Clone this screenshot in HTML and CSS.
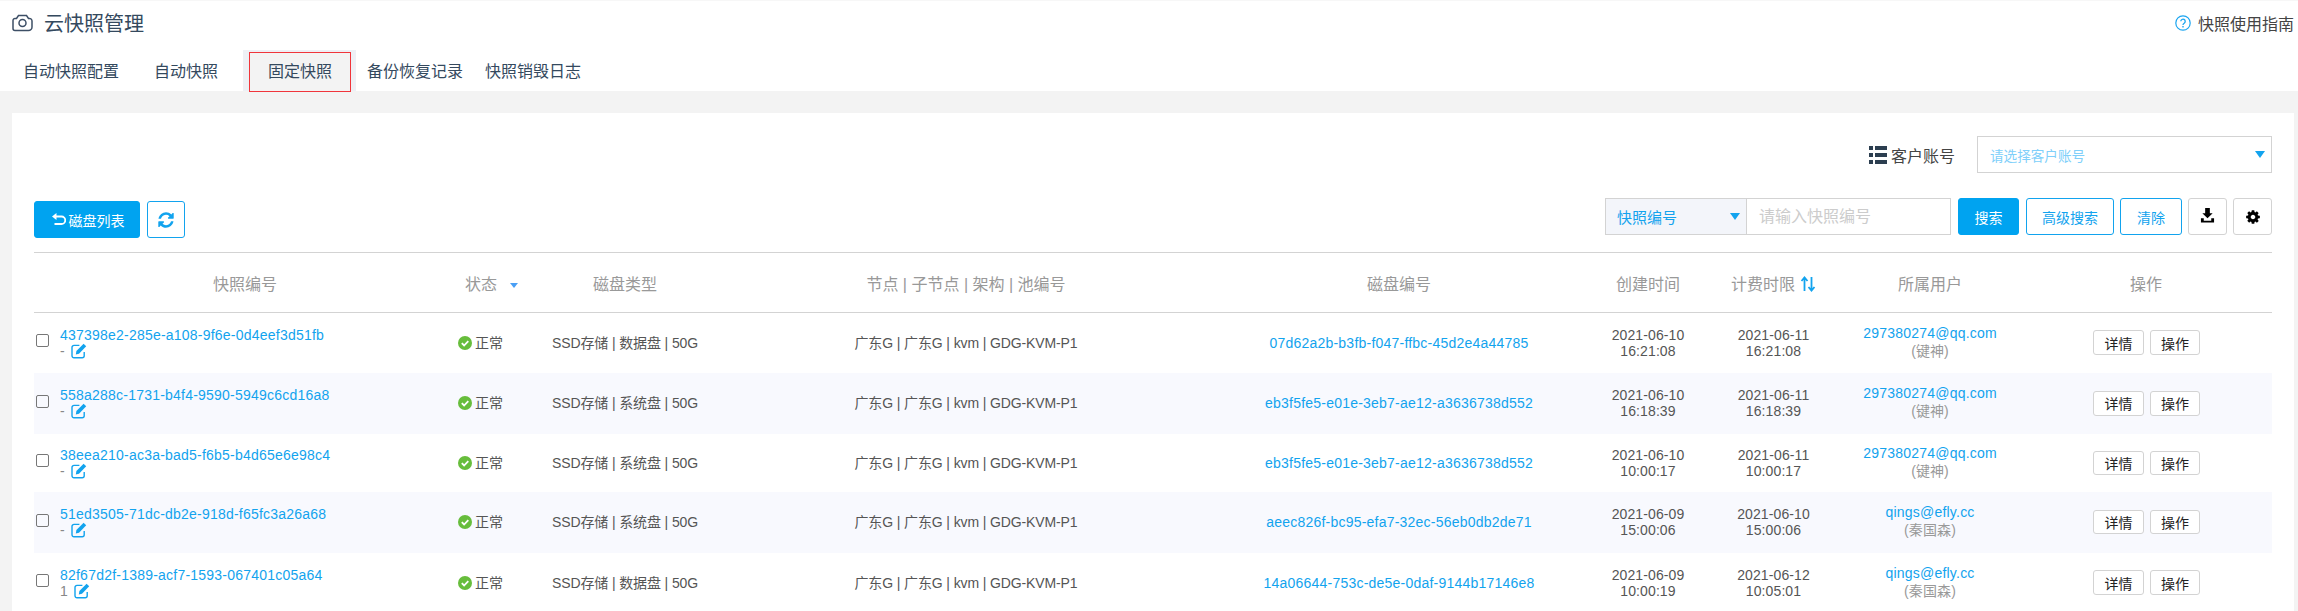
FILE: index.html
```html
<!DOCTYPE html>
<html lang="zh-CN">
<head>
    <meta charset="UTF-8">
    <title>云快照管理</title>
    <link rel="stylesheet" href="styles.css">
</head>
<body>
    <svg class="icon-defs" xmlns="http://www.w3.org/2000/svg">
        <symbol id="i-edit" viewBox="0 0 16 16">
            <path d="M13.2 9v3.8a2 2 0 0 1-2 2H3a2 2 0 0 1-2-2V4.4a2 2 0 0 1 2-2h5.4" fill="none" stroke="currentColor" stroke-width="1.4"/>
            <path d="M12.6.7l2.6 2.6-7.2 7.4-3.2.7.6-3.3z" fill="currentColor"/>
        </symbol>
        <symbol id="i-ok" viewBox="0 0 14 14">
            <circle cx="7" cy="7" r="7" fill="#67bd3c"/>
            <path d="M3.8 7.2l2.3 2.3 4.2-4.4" fill="none" stroke="#fff" stroke-width="1.8"/>
        </symbol>
    </svg>

    <header class="page-head">
        <div class="title-row">
            <h1 class="page-title">
                <svg class="camera" viewBox="0 0 21 18"><path d="M1 6.5a2 2 0 0 1 2-2h1.5l2-3h8l2 3h.5A2.5 2.5 0 0 1 20 7v6a3.5 3.5 0 0 1-3.5 3.5H3a2 2 0 0 1-2-2z" fill="none" stroke="#3d4f66" stroke-width="1.5"/><circle cx="10.5" cy="9" r="3.5" fill="none" stroke="#3d4f66" stroke-width="1.5"/></svg>
                云快照管理
            </h1>
            <a class="guide">
                <svg class="help" viewBox="0 0 16 16"><circle cx="8" cy="8" r="7.2" fill="none" stroke="#1ba5f0" stroke-width="1.2"/><path d="M5.8 6.3a2.2 2.2 0 1 1 3.4 1.9c-.8.5-1.2.9-1.2 1.8" fill="none" stroke="#1ba5f0" stroke-width="1.3"/><rect x="7.3" y="11" width="1.4" height="1.5" fill="#1ba5f0"/></svg>
                快照使用指南
            </a>
        </div>
        <nav class="tabs">
            <a class="tab tab-config">自动快照配置</a>
            <a class="tab tab-auto">自动快照</a>
            <a class="tab-wrap"><span class="tab-active">固定快照</span></a>
            <a class="tab tab-restore">备份恢复记录</a>
            <a class="tab">快照销毁日志</a>
        </nav>
    </header>

    <main class="card">
        <div class="account-row">
            <svg class="list-icon" viewBox="0 0 18 18"><path d="M0 0h4v4H0zM6 0h12v4H6zM0 7h4v4H0zM6 7h12v4H6zM0 14h4v4H0zM6 14h12v4H6z" fill="#2c3e50"/></svg>
            <span class="account-label">客户账号</span>
            <div class="account-select">
                <span>请选择客户账号</span>
                <i class="caret"></i>
            </div>
        </div>

        <div class="toolbar">
            <div class="toolbar-left">
                <button class="btn btn-primary btn-back">
                    <svg class="back-icon" viewBox="0 0 14 13"><path d="M0 3.5L4.5 0v7z" fill="#fff"/><path d="M3.5 3.5h6a3.5 3.5 0 0 1 0 7.5H2.5" fill="none" stroke="#fff" stroke-width="1.8"/></svg>
                    磁盘列表
                </button>
                <button class="btn btn-outline btn-refresh">
                    <svg viewBox="0 0 1792 1792"><path d="M1639 1056q0 5-1 7-64 268-268 434.5t-478 166.5q-146 0-282.5-55t-243.5-157l-129 129q-19 19-45 19t-45-19-19-45v-448q0-26 19-45t45-19h448q26 0 45 19t19 45-19 45l-137 137q71 66 161 102t187 36q134 0 250-65t186-179q11-17 53-117 8-23 30-23h192q13 0 22.5 9.5t9.5 22.5zm25-800v448q0 26-19 45t-45 19h-448q-26 0-45-19t-19-45 19-45l138-138q-148-137-349-137-134 0-250 65t-186 179q-11 17-53 117-8 23-30 23h-199q-13 0-22.5-9.5t-9.5-22.5v-7q65-268 270-434.5t480-166.5q146 0 284 55.5t245 156.5l130-129q19-19 45-19t45 19 19 45z" fill="#12a3ee"/></svg>
                </button>
            </div>
            <div class="toolbar-right">
                <div class="search-type">
                    <span>快照编号</span>
                    <i class="caret"></i>
                </div>
                <div class="search-input">请输入快照编号</div>
                <button class="btn btn-primary btn-search">搜索</button>
                <button class="btn btn-outline btn-advanced">高级搜索</button>
                <button class="btn btn-outline btn-clear">清除</button>
                <button class="btn btn-plain">
                    <svg class="download-icon" viewBox="0 0 16 16"><path d="M5.5 0h5v5.5h3L8 11 2.5 5.5h3z" fill="#000"/><path d="M1 11h3v2.5h8V11h3v4.5H1z" fill="#000"/></svg>
                </button>
                <button class="btn btn-plain">
                    <svg class="gear-icon" viewBox="0 0 1792 1792"><path d="M1152 896q0-106-75-181t-181-75-181 75-75 181 75 181 181 75 181-75 75-181zm512-109v222q0 12-8 23t-20 13l-185 28q-19 54-39 91 35 50 107 138 10 12 10 25t-9 23q-27 37-99 108t-94 71q-12 0-26-9l-138-108q-44 23-91 38-16 136-29 186-7 28-36 28h-222q-14 0-24.5-8.5t-11.5-21.5l-28-184q-49-16-90-37l-141 107q-10 9-25 9-14 0-25-11-126-114-165-168-7-10-7-23 0-12 8-23 15-21 51-66.5t54-70.5q-27-50-41-99l-183-27q-13-2-21-12.5t-8-23.5v-222q0-12 8-23t19-13l186-28q14-46 39-92-40-57-107-138-10-12-10-24 0-10 9-23 26-36 98.5-107.5t94.5-71.5q13 0 26 10l138 107q44-23 91-38 16-136 29-186 7-28 36-28h222q14 0 24.5 8.5t11.5 21.5l28 184q49 16 90 37l142-107q9-9 24-9 13 0 25 10 129 119 165 170 7 8 7 22 0 12-8 23-15 21-51 66.5t-54 70.5q26 50 41 98l183 28q13 2 21 12.5t8 23.5z" fill="#000"/></svg>
                </button>
            </div>
        </div>

        <table class="snap-table">
            <colgroup>
                <col class="col-id"><col class="col-status"><col class="col-type"><col class="col-node">
                <col class="col-disk"><col class="col-created"><col class="col-expire"><col class="col-user"><col class="col-action">
            </colgroup>
            <thead>
                <tr>
                    <th>快照编号</th>
                    <th>状态<i class="caret caret-small"></i></th>
                    <th>磁盘类型</th>
                    <th>节点 | 子节点 | 架构 | 池编号</th>
                    <th>磁盘编号</th>
                    <th>创建时间</th>
                    <th>计费时限<svg class="sort-icon" viewBox="0 0 16 16"><path d="M4.5 15V2M1.5 5l3-3.5 3 3.5M11.5 1v13M8.5 11l3 3.5 3-3.5" fill="none" stroke="#12a3ee" stroke-width="1.8"/></svg></th>
                    <th>所属用户</th>
                    <th>操作</th>
                </tr>
            </thead>
            <tbody id="snapTableBody">
                <!-- Rows will be populated by JavaScript -->
            </tbody>
        </table>
    </main>

    <script>
        const snapshots = [
            { id: '437398e2-285e-a108-9f6e-0d4eef3d51fb', note: '-', type: '数据盘', disk: '07d62a2b-b3fb-f047-ffbc-45d2e4a44785', created: ['2021-06-10', '16:21:08'], expire: ['2021-06-11', '16:21:08'], mail: '297380274@qq.com', user: '键神' },
            { id: '558a288c-1731-b4f4-9590-5949c6cd16a8', note: '-', type: '系统盘', disk: 'eb3f5fe5-e01e-3eb7-ae12-a3636738d552', created: ['2021-06-10', '16:18:39'], expire: ['2021-06-11', '16:18:39'], mail: '297380274@qq.com', user: '键神' },
            { id: '38eea210-ac3a-bad5-f6b5-b4d65e6e98c4', note: '-', type: '系统盘', disk: 'eb3f5fe5-e01e-3eb7-ae12-a3636738d552', created: ['2021-06-10', '10:00:17'], expire: ['2021-06-11', '10:00:17'], mail: '297380274@qq.com', user: '键神' },
            { id: '51ed3505-71dc-db2e-918d-f65fc3a26a68', note: '-', type: '系统盘', disk: 'aeec826f-bc95-efa7-32ec-56eb0db2de71', created: ['2021-06-09', '15:00:06'], expire: ['2021-06-10', '15:00:06'], mail: 'qings@efly.cc', user: '秦国森' },
            { id: '82f67d2f-1389-acf7-1593-067401c05a64', note: '1', type: '数据盘', disk: '14a06644-753c-de5e-0daf-9144b17146e8', created: ['2021-06-09', '10:00:19'], expire: ['2021-06-12', '10:05:01'], mail: 'qings@efly.cc', user: '秦国森' }
        ];

        const tableBody = document.getElementById('snapTableBody');
        snapshots.forEach(snap => {
            const row = document.createElement('tr');
            row.innerHTML = `
                <td>
                    <div class="id-cell">
                        <i class="check"></i>
                        <div>
                            <a class="link">${snap.id}</a>
                            <div class="note">${snap.note}<svg class="edit-icon"><use href="#i-edit"/></svg></div>
                        </div>
                    </div>
                </td>
                <td><span class="status"><svg class="ok-icon"><use href="#i-ok"/></svg>正常</span></td>
                <td class="center tight">SSD存储 | ${snap.type} | 50G</td>
                <td class="center tight">广东G | 广东G | kvm | GDG-KVM-P1</td>
                <td class="center"><a class="link">${snap.disk}</a></td>
                <td class="center">${snap.created[0]}<br>${snap.created[1]}</td>
                <td class="center">${snap.expire[0]}<br>${snap.expire[1]}</td>
                <td class="center"><a class="link">${snap.mail}</a><div class="user">(${snap.user})</div></td>
                <td class="center actions"><button class="btn-row">详情</button><button class="btn-row">操作</button></td>
            `;
            tableBody.appendChild(row);
        });
    </script>
</body>
</html>
```

FILE: styles.css
```css
* {
    box-sizing: border-box;
}
html, body {
    height: 611px;
    overflow: hidden;
}
body {
    margin: 0;
    background-color: #f3f3f3;
    color: #555;
    font-family: "Liberation Sans", "Noto Sans CJK SC", sans-serif;
    font-size: 14px;
}
.icon-defs {
    display: none;
}
.page-head {
    height: 91px;
    background-color: #fff;
    border-top: 1px solid #f7f7f7;
}
.title-row {
    height: 49px;
    padding: 0 4px 6px 12px;
    display: flex;
    justify-content: space-between;
    align-items: center;
}
.page-title {
    margin: 0;
    display: flex;
    align-items: center;
    font-size: 20px;
    font-weight: normal;
    color: #34495e;
}
.camera {
    width: 21px;
    height: 18px;
    margin-right: 11px;
}
.guide {
    display: flex;
    align-items: center;
    font-size: 16px;
    color: #444;
}
.help {
    width: 16px;
    height: 16px;
    margin-right: 7px;
}
.tabs {
    height: 41px;
    padding-left: 23px;
    display: flex;
    align-items: flex-end;
    font-size: 16px;
    color: #34495e;
}
.tab {
    line-height: 38px;
}
.tab-config {
    margin-right: 35px;
}
.tab-auto {
    margin-right: 25px;
}
.tab-restore {
    margin-right: 22px;
}
.tab-wrap {
    width: 113px;
    height: 41px;
    margin-right: 11px;
    padding: 2px 5px 0 6px;
    background-color: #eef0f5;
}
.tab-active {
    display: block;
    height: 40px;
    line-height: 37px;
    text-align: center;
    background-color: #f3f3f3;
    border: 1px solid #f0353b;
}

.card {
    height: 498px;
    margin: 22px 4px 0 12px;
    padding: 23px 22px 0;
    background-color: #fff;
}
.account-row {
    display: flex;
    justify-content: flex-end;
    align-items: center;
    height: 37px;
}
.list-icon {
    width: 18px;
    height: 18px;
    margin-right: 4px;
}
.account-label {
    font-size: 16px;
    color: #444;
    margin-right: 22px;
}
.account-select {
    width: 295px;
    height: 37px;
    padding: 0 6px 0 12px;
    display: flex;
    justify-content: space-between;
    align-items: center;
    font-size: 13.6px;
    color: #80cffa;
    border: 1px solid #d3d3d3;
}
.caret {
    width: 0;
    height: 0;
    border-style: solid;
    border-width: 7px 5px 0;
    border-color: #12a3ee transparent transparent;
}
.caret-small {
    display: inline-block;
    margin-left: 13px;
    border-width: 5px 4px 0;
    border-top-color: #4a9ff5;
    vertical-align: middle;
}

.toolbar {
    height: 54px;
    margin-top: 25px;
    display: flex;
    justify-content: space-between;
    align-items: flex-start;
}
.toolbar-left {
    margin-top: 3px;
    display: flex;
    gap: 7px;
}
.toolbar-right {
    display: flex;
    height: 37px;
}
.btn {
    height: 37px;
    padding: 0;
    display: flex;
    justify-content: center;
    align-items: center;
    font-family: inherit;
    font-size: 14px;
    border-radius: 3px;
    background-color: #fff;
    border: 1px solid #12a3ee;
}
.btn-primary {
    background-color: #00a3f0;
    border-color: #00a3f0;
    color: #fff;
}
.btn-outline {
    color: #12a3ee;
}
.btn-plain {
    width: 39px;
    margin-left: 6px;
    border-color: #d3d3d3;
}
.download-icon {
    width: 15px;
    height: 15px;
    margin-bottom: 2px;
}
.gear-icon {
    width: 16px;
    height: 16px;
}
.btn-back {
    width: 106px;
    padding-left: 2px;
}
.back-icon {
    width: 14px;
    height: 13px;
    margin-right: 3px;
}
.btn-refresh {
    width: 38px;
}
.btn-refresh svg {
    width: 18px;
    height: 18px;
}
.search-type {
    width: 142px;
    padding: 0 6px 0 11px;
    display: flex;
    justify-content: space-between;
    align-items: center;
    font-size: 15px;
    color: #12a3ee;
    background-color: #f3f5fa;
    border: 1px solid #d3d3d3;
}
.search-input {
    width: 204px;
    padding-left: 12px;
    line-height: 35px;
    font-size: 16px;
    color: #ccc;
    border: 1px solid #d3d3d3;
    border-left: none;
}
.btn-search {
    width: 61px;
    margin-left: 7px;
}
.btn-advanced {
    width: 88px;
    margin-left: 7px;
}
.btn-clear {
    width: 62px;
    margin-left: 6px;
}

.snap-table {
    width: 2238px;
    table-layout: fixed;
    border-collapse: collapse;
    border-top: 1px solid #d3d3d3;
}
.col-id { width: 422px; }
.col-status { width: 71px; }
.col-type { width: 196px; }
.col-node { width: 486px; }
.col-disk { width: 380px; }
.col-created { width: 118px; }
.col-expire { width: 133px; }
.col-user { width: 180px; }
.col-action { width: 252px; }
.snap-table th {
    height: 60px;
    padding: 0;
    font-size: 16px;
    font-weight: normal;
    color: #999;
    border-bottom: 1px solid #d3d3d3;
}
.snap-table td {
    padding: 0;
    line-height: 16px;
    letter-spacing: .1px;
}
.snap-table tbody tr {
    height: 60px;
}
.snap-table tbody tr:nth-child(even) {
    height: 61px;
    background-color: #f8f9fe;
}
.snap-table tbody tr:nth-child(3) {
    height: 58px;
}
.snap-table td.tight {
    letter-spacing: -.12px;
}
.center {
    text-align: center;
}
.sort-icon {
    width: 16px;
    height: 16px;
    margin-left: 5px;
    vertical-align: -2px;
}
.id-cell {
    display: flex;
    align-items: center;
}
.check {
    width: 13px;
    height: 13px;
    margin: 0 11px 0 2px;
    position: relative;
    top: -2px;
    border: 1px solid #777;
    border-radius: 2px;
}
.link {
    color: #12a3ee;
    letter-spacing: .22px;
}
.note {
    display: flex;
    align-items: center;
    color: #888;
    height: 16px;
}
.edit-icon {
    width: 16px;
    height: 16px;
    margin-left: 6px;
    color: #12a3ee;
}
.status {
    display: flex;
    align-items: center;
    margin-left: 2px;
}
.ok-icon {
    width: 14px;
    height: 14px;
    margin-right: 3px;
}
.user {
    margin-top: 2px;
    padding-bottom: 2px;
    color: #999;
}
.snap-table td.actions {
    padding-left: 1px;
}
.btn-row {
    width: 51px;
    height: 25px;
    margin: 0 3px;
    padding: 0;
    font-family: inherit;
    font-size: 14px;
    color: #222;
    background-color: #fff;
    border: 1px solid #d3d3d3;
    border-radius: 3px;
}
.btn-row + .btn-row {
    width: 50px;
}
.snap-table tbody tr:nth-child(3) .btn-row,
.snap-table tbody tr:nth-child(4) .btn-row {
    height: 24px;
}
```
